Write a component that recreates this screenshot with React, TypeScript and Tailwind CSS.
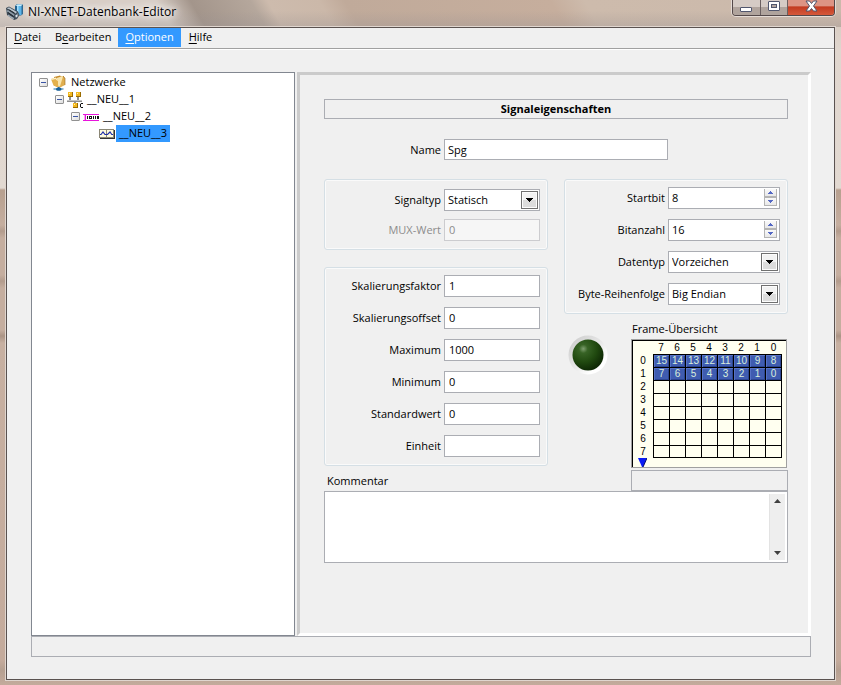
import { useState } from 'react';
import type { ReactNode } from 'react';
import clsx from 'clsx';

interface FieldRowProps {
  id: string;
  label: string;
  disabled?: boolean;
  children: ReactNode;
}

function FieldRow({ id, label, disabled, children }: FieldRowProps) {
  return (
    <div className="flex h-[22px] items-center gap-[3px]">
      <label
        htmlFor={id}
        className={clsx('flex-1 whitespace-nowrap text-right', disabled && 'text-[#8c8c8c]')}
      >
        {label}
      </label>
      {children}
    </div>
  );
}

interface TextFieldProps {
  id: string;
  label: string;
  value: string;
  disabled?: boolean;
}

function TextField({ id, label, value, disabled }: TextFieldProps) {
  return (
    <FieldRow id={id} label={label} disabled={disabled}>
      <input
        id={id}
        type="text"
        defaultValue={value}
        disabled={disabled}
        className="h-[22px] w-24 border border-[#abadb3] bg-white px-1 pb-px outline-none disabled:border-[#cccccf] disabled:bg-[#f6f6f6] disabled:text-[#8c8c8c]"
      />
    </FieldRow>
  );
}

interface SelectFieldProps {
  id: string;
  label: string;
  options: string[];
  wide?: boolean;
}

function SelectField({ id, label, options, wide }: SelectFieldProps) {
  return (
    <FieldRow id={id} label={label}>
      <div className={clsx('relative h-[22px]', wide ? 'w-28' : 'w-24')}>
        <select
          id={id}
          className="h-full w-full appearance-none border border-[#abadb3] bg-white pl-[3px] pr-5 outline-none"
        >
          {options.map((option) => (
            <option key={option}>{option}</option>
          ))}
        </select>
        {/* drop-down button face */}
        <span className="pointer-events-none absolute right-[2px] top-[2px] flex h-[18px] w-[17px] items-center justify-center border border-[#707070] bg-linear-to-b from-[#f2f2f2] from-50% to-[#dcdcdc] to-50% shadow-[inset_0_0_0_1px_#fcfcfc]">
          <svg width="7" height="4" viewBox="0 0 7 4" shapeRendering="crispEdges">
            <path d="M0 0h7v1H6v1H5v1H4v1H3V3H2V2H1V1H0z" />
          </svg>
        </span>
      </div>
    </FieldRow>
  );
}

interface SpinFieldProps {
  id: string;
  label: string;
  initial: number;
}

function SpinField({ id, label, initial }: SpinFieldProps) {
  const [value, setValue] = useState(initial);

  return (
    <FieldRow id={id} label={label}>
      <div className="flex h-[22px] w-28 border border-[#abadb3] bg-white pr-[2px]">
        <input
          id={id}
          type="text"
          inputMode="numeric"
          value={value}
          onChange={(e) => setValue(Number(e.target.value) || 0)}
          className="w-0 flex-1 px-[3px] outline-none"
        />
        <div className="flex w-[13px] flex-col pb-[2px] pt-px">
          <button
            type="button"
            aria-label={`${label} erhöhen`}
            onClick={() => setValue(value + 1)}
            className="flex flex-1 items-center justify-center border border-t-0 border-[#b4b4b4] bg-linear-to-b from-[#fafafa] to-[#e8e8e8]"
          >
            <svg width="5" height="3" viewBox="0 0 5 3" shapeRendering="crispEdges">
              <path d="M2 0h1v1h1v1h1v1H0V2h1V1h1z" fill="#5468c4" />
            </svg>
          </button>
          <button
            type="button"
            aria-label={`${label} verringern`}
            onClick={() => setValue(value - 1)}
            className="flex flex-1 items-center justify-center border border-[#b4b4b4] bg-linear-to-b from-[#fafafa] to-[#e8e8e8]"
          >
            <svg width="5" height="3" viewBox="0 0 5 3" shapeRendering="crispEdges">
              <path d="M0 0h5v1H4v1H3v1H2V2H1V1H0z" fill="#5468c4" />
            </svg>
          </button>
        </div>
      </div>
    </FieldRow>
  );
}

function Group({ className, children }: { className: string; children: ReactNode }) {
  return (
    <div
      className={clsx(
        'flex flex-col rounded-[3px] border border-[#d5dfe5] pr-[7px] shadow-[inset_0_0_0_1px_#fafafa]',
        className,
      )}
    >
      {children}
    </div>
  );
}

function AppIcon() {
  return (
    <svg width="18" height="18" viewBox="0 0 18 18">
      <path d="M9 3 11 1h5l1 1v9l-2 1.500h-4L9 10z" fill="#24618c" />
      <path d="M11 3h4.500v9H11z" fill="#58b4ea" />
      <path d="M11 3h1.500v9H11z" fill="#a2dbf8" />
      <path d="m9.500 2.800 2-1.600h5l-1.200 1.800h-4z" fill="#c6ebfb" />
      <path d="M0 5 3 3.500l9 5 1.500 3.500-2.500 4-3 1L1 12z" fill="#3d4a56" />
      <path d="m1 5.500 2-1.200L11 9 9.500 10.500z" fill="#b9c4cd" />
      <path d="m0 8 2-1 6.500 4.500L8 13z" fill="#8d9ba7" />
      <path d="m2 11.500 6 3.500-.5 1.500L2 13z" fill="#a3afb9" />
      <path d="m9 12.500 3-2.500.5 2L10 15.500z" fill="#7b8a96" />
      <path d="M2.500 6.500 8.500 10M2 9.500l5.500 4" stroke="#1d252c" strokeWidth="1" />
      <circle cx="10.500" cy="13" r="1" fill="#e3eaef" />
    </svg>
  );
}

function FolderIcon() {
  return (
    <svg width="16" height="16" viewBox="0 0 16 16">
      <path d="M3 2 9 .5l1 1L13 1v8.500L8 12.500 3 10.500z" fill="#c48a2b" />
      <path d="M5.500 3 12 1v9l-4.500 2z" fill="#f9e6ae" />
      <path d="m0 4 4.500-1.500L7 5v7.500L2.500 10.500z" fill="#e3b14c" />
      <path d="m0 4 4.500-1.500L7 5l-.5 1L4.500 4l-4 1z" fill="#fbf0cc" />
      <path d="M12 1.500 14 3v7l-5.500 2.700z" fill="#dfae50" />
      <path d="M12 1.500 14 3v7" stroke="#9c6a1b" strokeWidth="0.600" fill="none" />
      <path d="M7 12h1.500v1.500H7z" fill="#2d6f9f" />
      <path d="M2.500 14h10" stroke="#3e88b8" strokeWidth="1.200" />
      <path d="M5 14.200c0-1 1-1.700 2.700-1.700s2.800.7 2.800 1.700-1.100 1.600-2.800 1.600S5 15.200 5 14.200z" fill="#17609a" />
    </svg>
  );
}

function NetworkIcon() {
  return (
    <svg width="16" height="16" viewBox="0 0 16 16">
      <path d="M0 8h15v2H0zM2 5h2v3H2zM10 5h2v3h-2zM7 10h2v2H7z" fill="#8f8f8f" />
      <path d="M0 8h15v1H0z" fill="#c4c4c4" />
      <path d="M1 0h5v5H1zM9 0h5v5H9zM6 11h5v5H6z" fill="#9a6c00" />
      <path d="M1 0h4v4H1zM9 0h4v4H9zM6 11h4v4H6z" fill="#f2b822" />
      <path d="M2 1h1v1H2zM10 1h1v1h-1zM7 12h1v1H7z" fill="#fff1b0" />
      <path d="M16 11.500h-2l-.500.500v3l.500.500h2" stroke="#111" fill="none" />
    </svg>
  );
}

function FrameIcon() {
  return (
    <svg width="16" height="16" viewBox="0 0 16 16" shapeRendering="crispEdges">
      <path d="M0 5h16v1H3v5h13v1H0v-1h1V6H0z" fill="#e815dc" />
      <path d="M1 6h1v5H1z" fill="#f6a9f2" />
      <path d="M2 6h1v5H2z" fill="#e815dc" />
      <path d="M4 7h1v3H4zM6 7h3v3H6zM10 7h1v3h-1zM12 7h1v3h-1zM14 7h2v3h-2z" fill="#151515" />
      <path d="M7 8h1v1H7z" fill="#fff" />
    </svg>
  );
}

function SignalIcon() {
  return (
    <svg width="16" height="16" viewBox="0 0 16 16">
      <path d="M1 4h15v9H1z" fill="#333" />
      <path d="M0 3h15v9H0z" fill="#8b8775" />
      <path d="M1 4h6v7H1zM8 4h6v7H8z" fill="#fffbe0" />
      <path d="M1 8.500h1l2-2.500 2 2.500h2.500L11 6l1.800 2.500H14" stroke="#1f2fa8" strokeWidth="1.200" fill="none" />
    </svg>
  );
}

interface TreeItemProps {
  icon: ReactNode;
  label: string;
  selected?: boolean;
  children?: ReactNode;
}

function TreeItem({ icon, label, selected, children }: TreeItemProps) {
  const [open, setOpen] = useState(true);

  return (
    <li role="treeitem" aria-expanded={children ? open : undefined} aria-selected={!!selected}>
      <div className="flex h-[17px] items-center">
        {children ? (
          <button
            type="button"
            aria-label={`${label} umschalten`}
            onClick={() => setOpen(!open)}
            className="mr-[3px] flex size-[9px] items-center justify-center rounded-[1px] border border-[#919191] bg-linear-to-br from-white to-[#dedede]"
          >
            <span className={clsx('h-px w-[5px] bg-[#3a55a5]', !open && 'shadow-[0_1px_0_#3a55a5]')} />
          </button>
        ) : (
          <span className="w-3" />
        )}
        {icon}
        <span
          className={clsx(
            'ml-px h-[17px] px-[3px] leading-4',
            selected && 'bg-[#3399ff]',
          )}
        >
          {label}
        </span>
      </div>
      {children && open && (
        <ul role="group" className="pl-4">
          {children}
        </ul>
      )}
    </li>
  );
}

const bits = [7, 6, 5, 4, 3, 2, 1, 0];
const bytes = [0, 1, 2, 3, 4, 5, 6, 7];

function FrameOverview() {
  return (
    <div className="w-[156px] border border-[#a0a0a0]">
      <div className="border-l border-t border-black bg-[#fffff0]">
        <table className="border-separate border-spacing-0 table-fixed text-center font-['Liberation_Sans',Arial,sans-serif] text-[10px] leading-3">
          <thead>
            <tr className="h-[13px]">
              <td className="w-5 p-0" />
              {bits.map((bit) => (
                <th key={bit} scope="col" className="w-4 p-0 font-normal">
                  {bit}
                </th>
              ))}
            </tr>
          </thead>
          <tbody>
            {bytes.map((byte) => (
              <tr key={byte} className="h-[13px]">
                <th scope="row" className="p-0 font-normal">
                  {byte}
                </th>
                {bits.map((bit) => (
                  <td
                    key={bit}
                    className={clsx(
                      'w-4 border-l border-t border-black p-0 last:w-[17px] last:border-r',
                      byte === 7 && 'border-b',
                      byte < 2 && 'bg-[#3f5cb0] text-[#d9efdc] shadow-[inset_1px_1px_0_#5672c6,inset_-1px_-1px_0_#2c4590]',
                    )}
                  >
                    {byte === 0 ? bit + 8 : byte === 1 ? bit : null}
                  </td>
                ))}
              </tr>
            ))}
          </tbody>
        </table>
        <div className="h-[9px] pl-[5px]">
          <svg width="9" height="9" viewBox="0 0 9 9">
            <path d="M0 0h9L5 9H4z" fill="#0a1cf5" />
            <path d="M9 0 5 9" stroke="#000a70" strokeWidth="1" />
          </svg>
        </div>
      </div>
    </div>
  );
}

function StatusLed() {
  return (
    <svg width="40" height="40" viewBox="0 0 40 40" role="img" aria-label="Status">
      <defs>
        <radialGradient id="led" cx="0.35" cy="0.3" r="0.7">
          <stop offset="0" stopColor="#7f9f70" />
          <stop offset="0.2" stopColor="#376325" />
          <stop offset="0.6" stopColor="#214a10" />
          <stop offset="1" stopColor="#0f2a05" />
        </radialGradient>
        <linearGradient id="rim" x1="0" y1="0" x2="1" y2="1">
          <stop offset="0.1" stopColor="#cfcfcf" />
          <stop offset="0.5" stopColor="#e8e8e8" />
          <stop offset="0.75" stopColor="#ffffff" />
        </linearGradient>
      </defs>
      <circle cx="20" cy="20" r="19.500" fill="url(#rim)" />
      <circle cx="20" cy="20" r="15.500" fill="url(#led)" />
    </svg>
  );
}

const menuItems = [
  { before: '', key: 'D', after: 'atei' },
  { before: 'B', key: 'e', after: 'arbeiten' },
  { before: '', key: 'O', after: 'ptionen', active: true },
  { before: '', key: 'H', after: 'ilfe' },
];

function TitleBar() {
  return (
    <header className="flex h-[27px] items-start justify-between bg-[linear-gradient(to_bottom,transparent_40%,#99919155_100%),linear-gradient(60deg,#d8cec6_0,#d8cec6_20%,#a3958b_24%,#b5a79c_31%,#cdbbad_33%,#cbb8a9_39%,#c0aa9a_42%,#c6ae9d_66%,#cdbbac_70%,#cbb9ab_100%)] px-[6px]">
      <div className="flex items-center gap-1 pt-[3px]">
        <AppIcon />
        <h1 className="text-xs leading-[18px] [text-shadow:0_0_6px_#fff,0_0_10px_#fff,0_0_14px_#fff]">
          NI-XNET-Datenbank-Editor
        </h1>
      </div>
      <div className="flex h-4 overflow-hidden rounded-b-[4px] border border-t-0 border-[#54494a] shadow-[0_0_0_1px_#e5dcd6]">
        <button
          type="button"
          aria-label="Minimieren"
          className="flex w-7 items-center justify-center border-r border-[#6b6060] bg-linear-to-b from-[#d5cbc5] from-50% to-[#b0a49d] to-50%"
        >
          <svg width="13" height="13" viewBox="0 0 13 13">
            <rect x="0.500" y="6.500" width="11" height="4" rx="0.500" fill="#fff" stroke="#50566d" />
          </svg>
        </button>
        <button
          type="button"
          aria-label="Maximieren"
          className="flex w-[27px] items-start justify-center border-r border-[#6b6060] bg-linear-to-b from-[#d5cbc5] from-50% to-[#b0a49d] to-50%"
        >
          <svg width="12" height="12" viewBox="0 0 12 12">
            <rect x="0.500" y="1.500" width="11" height="9" rx="0.500" fill="#fff" stroke="#50566d" />
            <rect x="3.500" y="4.500" width="5" height="3" fill="#b3a6a0" stroke="#50566d" />
          </svg>
        </button>
        <button
          type="button"
          aria-label="Schließen"
          className="flex w-[46px] items-start justify-center bg-linear-to-b from-[#dd9484] from-40% via-[#c23a20] via-45% to-[#d5583a]"
        >
          <svg width="13" height="12" viewBox="0 0 13 12">
            <path d="M1 1h3.500l2 2.500 2-2.500H12L8.500 6l3.500 5H8.500l-2-2.500-2 2.500H1l3.500-5z" fill="#fff" stroke="#50566d" />
          </svg>
        </button>
      </div>
    </header>
  );
}

export default function App() {
  return (
    <div className="flex min-h-screen flex-col bg-[#c5ad9e] bg-[linear-gradient(to_bottom,#d3c5b9_0,#e0d6ce_50px,#e2d9d1_188px,#b7a08f_190px,#c5ae9f_225px,#b39c8d_231px,#c5ae9f_238px,#c5ae9f_275px,#b39c8d_281px,#c5ae9f_288px,#c5ae9f_330px,#ab9485_336px,#c7b0a1_343px,#c4ab9c_660px,#b5a091_670px,#c4ab9c_100%)] font-['Open_Sans','Noto_Sans',sans-serif] text-[11px] leading-4 text-black">
      <TitleBar />
      <div className="mx-[6px] mb-[5px] flex flex-1 flex-col border border-[#5a5250] bg-[#f0f0f0] shadow-[0_0_0_1px_#e0d6cf]">
        <nav className="flex h-[21px] items-start border-b border-[#a0a0a0] shadow-[0_1px_0_#fff]">
          {menuItems.map((item) => (
            <button
              key={item.after}
              type="button"
              className={clsx('h-[19px] px-[7px] pb-[2px] leading-4', item.active && 'mr-px bg-[#3399ff] text-white')}
            >
              {item.before}
              <span className="underline underline-offset-2">{item.key}</span>
              {item.after}
            </button>
          ))}
        </nav>

        <div className="flex flex-1 flex-col pb-[22px] pl-6 pr-[23px] pt-[23px]">
          <main className="flex flex-1 gap-[2px]">
            <ul role="tree" className="w-[264px] border border-[#828790] bg-white pl-[7px] pt-px">
              <TreeItem icon={<FolderIcon />} label="Netzwerke">
                <TreeItem icon={<NetworkIcon />} label="__NEU__1">
                  <TreeItem icon={<FrameIcon />} label="__NEU__2">
                    <TreeItem icon={<SignalIcon />} label="__NEU__3" selected />
                  </TreeItem>
                </TreeItem>
              </TreeItem>
            </ul>

            <form className="flex-1 border-[3px] border-b-white border-l-[#cbcbcb] border-r-white border-t-[#cbcbcb] pl-6 pr-5 pt-6">
              <h2 className="h-5 border border-[#abadb3] text-center font-bold leading-[18px]">
                Signaleigenschaften
              </h2>

              <div className="mt-5 flex h-[21px] items-center gap-[3px]">
                <label htmlFor="name" className="w-[117px] text-right">
                  Name
                </label>
                <input
                  id="name"
                  type="text"
                  defaultValue="Spg"
                  className="h-[21px] w-56 border border-[#abadb3] bg-white px-[3px] outline-none"
                />
              </div>

              <div className="mt-[19px] grid grid-cols-2 gap-4">
                <div className="flex flex-col">
                  <Group className="gap-2 pb-2 pt-[9px]">
                    <SelectField id="signaltyp" label="Signaltyp" options={['Statisch', 'Dynamisch']} />
                    <TextField id="mux" label="MUX-Wert" value="0" disabled />
                  </Group>
                  <Group className="mt-[17px] gap-[10px] pb-2 pt-[7px]">
                    <TextField id="faktor" label="Skalierungsfaktor" value="1" />
                    <TextField id="offset" label="Skalierungsoffset" value="0" />
                    <TextField id="max" label="Maximum" value="1000" />
                    <TextField id="min" label="Minimum" value="0" />
                    <TextField id="standard" label="Standardwert" value="0" />
                    <TextField id="einheit" label="Einheit" value="" />
                  </Group>
                  <label htmlFor="kommentar" className="mt-auto pb-[2px] pl-[3px]">
                    Kommentar
                  </label>
                </div>

                <div className="flex flex-col">
                  <Group className="gap-[10px] pb-2 pt-[7px]">
                    <SpinField id="startbit" label="Startbit" initial={8} />
                    <SpinField id="bitanzahl" label="Bitanzahl" initial={16} />
                    <SelectField id="datentyp" label="Datentyp" options={['Vorzeichen', 'Ohne Vorzeichen']} wide />
                    <SelectField id="reihenfolge" label="Byte-Reihenfolge" options={['Big Endian', 'Little Endian']} wide />
                  </Group>
                  <div className="mt-[7px] flex justify-between pl-1">
                    <div className="pt-[14px]">
                      <StatusLed />
                    </div>
                    <div className="w-[157px]">
                      <h3 className="mb-[2px] pl-px">Frame-Übersicht</h3>
                      <FrameOverview />
                      <output className="mt-[2px] block h-[21px] border border-[#abadb3]" />
                    </div>
                  </div>
                </div>
              </div>

              <div className="flex h-[72px] border border-[#abadb3] bg-white p-[2px]">
                <textarea id="kommentar" className="flex-1 resize-none overflow-hidden px-1 outline-none" />
                <div className="flex w-4 flex-col justify-between border-l border-[#e3e3e3] bg-[#eeeeee] py-px">
                  <button type="button" aria-label="Nach oben" className="flex h-3 items-center justify-center">
                    <svg width="7" height="4" viewBox="0 0 7 4">
                      <path d="M3.500 0 7 4H0z" fill="#404040" />
                    </svg>
                  </button>
                  <button type="button" aria-label="Nach unten" className="flex h-3 items-center justify-center">
                    <svg width="7" height="4" viewBox="0 0 7 4">
                      <path d="M0 0h7L3.500 4z" fill="#404040" />
                    </svg>
                  </button>
                </div>
              </div>
            </form>
          </main>
          <footer className="h-[21px] border border-[#abadb3]" />
        </div>
      </div>
    </div>
  );
}
